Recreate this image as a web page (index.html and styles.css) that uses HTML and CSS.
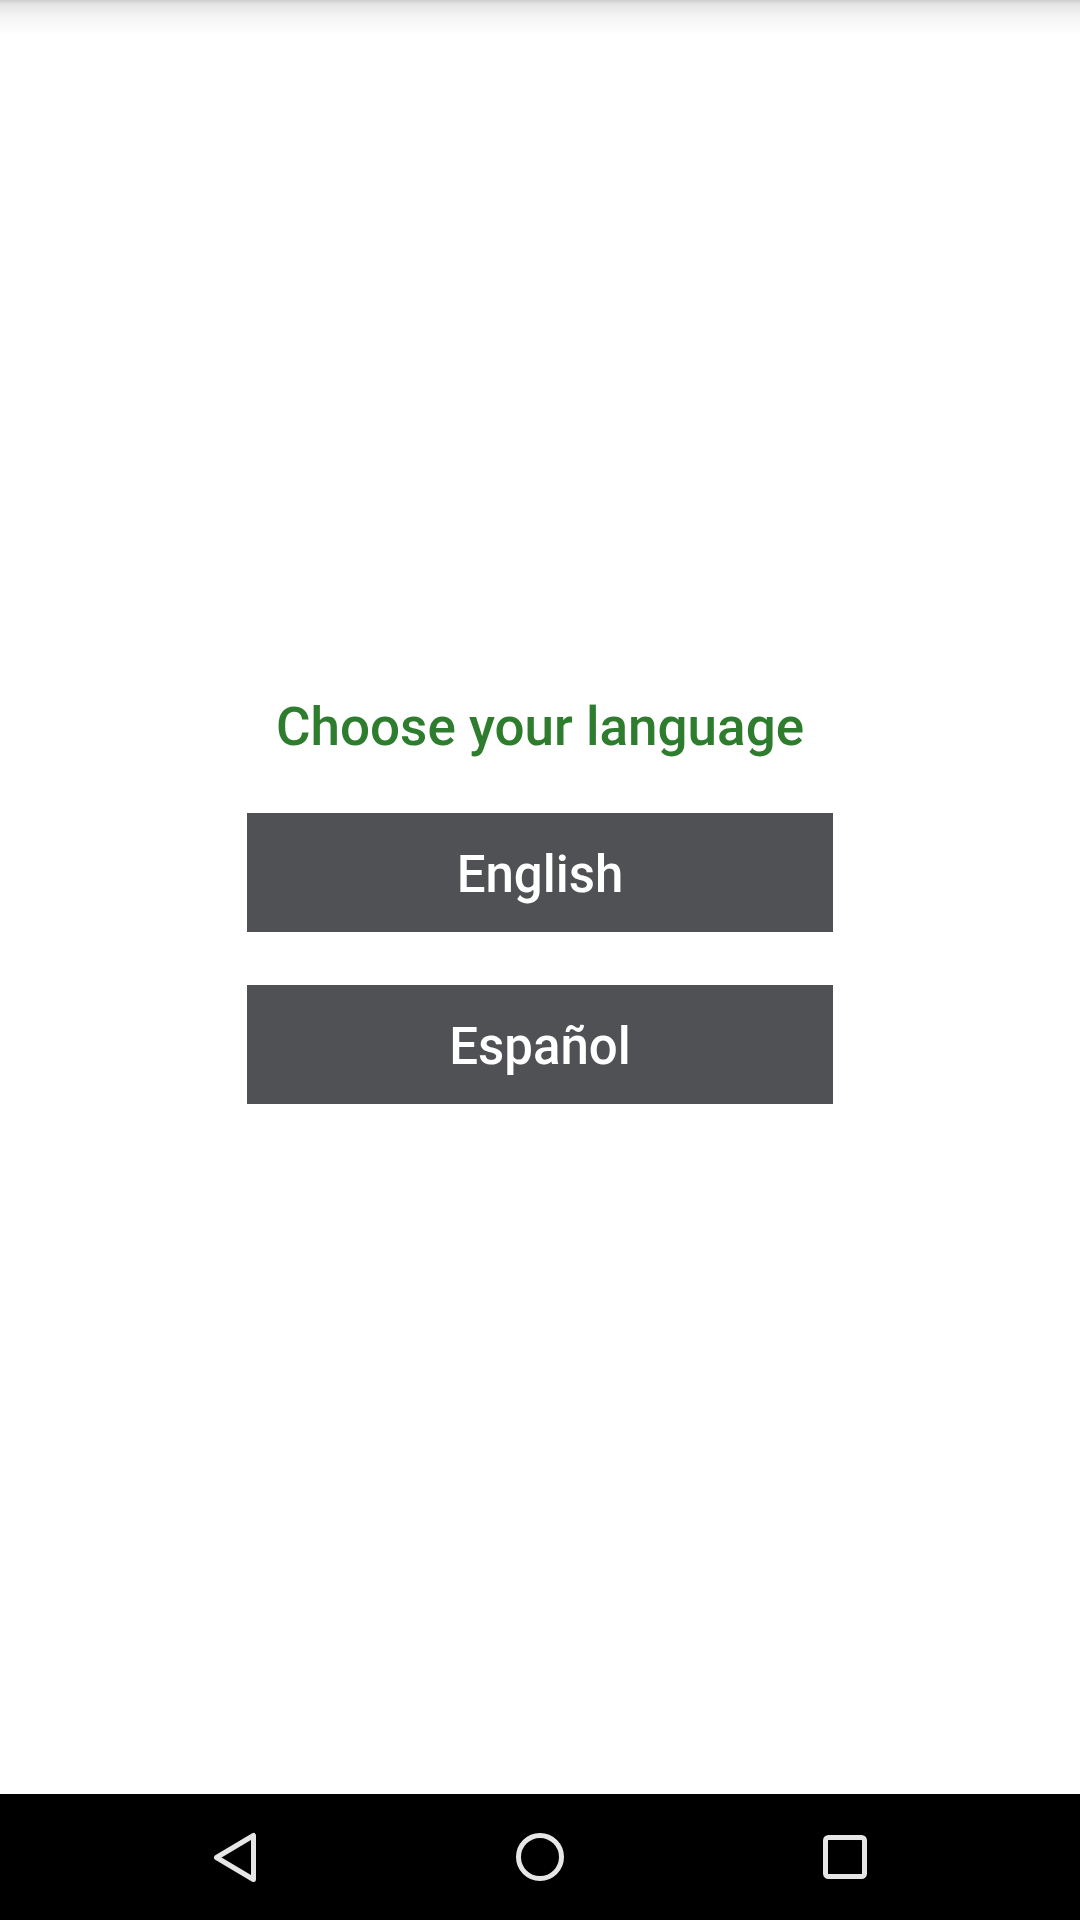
FILE: index.html
```html
<!DOCTYPE html>
<html lang="en">
<head>
<meta charset="utf-8">
<title>Choose your language</title>
<link rel="stylesheet" href="styles.css">
</head>
<body>
<div class="screen">
  <div class="top-shadow"></div>
  <main class="content">
    <h1 class="title">Choose your language</h1>
    <button class="lang-btn">English</button>
    <button class="lang-btn">Español</button>
  </main>
  <nav class="navbar">
    <div class="nav-item">
      <svg width="60" height="60" viewBox="0 0 60 60"><polygon points="48.5,8.5 48.5,52.5 11.5,30.5" fill="none" stroke="#e6e6e6" stroke-width="5" stroke-linejoin="round"/></svg>
    </div>
    <div class="nav-item">
      <svg width="60" height="60" viewBox="0 0 60 60"><circle cx="30" cy="30" r="21.5" fill="none" stroke="#e6e6e6" stroke-width="5"/></svg>
    </div>
    <div class="nav-item">
      <svg width="60" height="60" viewBox="0 0 60 60"><rect x="10.5" y="10.5" width="39" height="39" rx="3" fill="none" stroke="#e6e6e6" stroke-width="5"/></svg>
    </div>
  </nav>
</div>
</body>
</html>
```
FILE: styles.css
```css
html, body {
  margin: 0;
  padding: 0;
  background: #ffffff;
}
.screen {
  width: 1080px;
  height: 1920px;
  display: flex;
  flex-direction: column;
  font-family: Roboto, "Noto Sans", sans-serif;
}
.top-shadow {
  height: 36px;
  flex: none;
  background: linear-gradient(#cdcdcd 0px, #e4e4e4 4px, #f4f4f4 16px, #ffffff 36px);
}
.content {
  flex: 1;
  display: flex;
  flex-direction: column;
  align-items: center;
  padding-top: 660px;
}
.title {
  margin: 0 0 55px 0;
  font-size: 53px;
  line-height: 62px;
  font-weight: 500;
  color: #2e7d2e;
}
.lang-btn {
  width: 586px;
  height: 119px;
  border: none;
  border-radius: 0;
  background: #505155;
  color: #ffffff;
  font-family: Roboto, "Noto Sans", sans-serif;
  font-size: 51px;
  font-weight: 500;
  padding: 3px 0 0 0;
  display: flex;
  align-items: center;
  justify-content: center;
}
.lang-btn + .lang-btn {
  margin-top: 53px;
}
.navbar {
  height: 126px;
  flex: none;
  background: #000000;
  display: flex;
  align-items: center;
  justify-content: center;
  gap: 245px;
}
.nav-item {
  width: 60px;
  height: 60px;
}
.nav-item svg {
  display: block;
}
```
